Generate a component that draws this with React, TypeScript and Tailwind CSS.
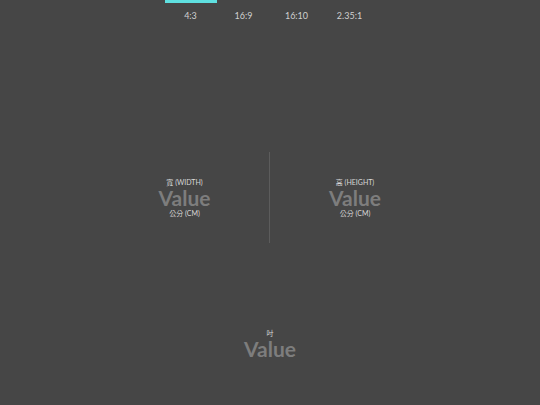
const RATIOS = ["4:3", "16:9", "16:10", "2.35:1"];

function Field({ label, unit }: { label: string; unit?: string }) {
  return (
    <div className="flex flex-col items-center">
      <span className="text-[7px] leading-[11px] text-[#d8d8d8]">{label}</span>
      <span className="text-[21px] font-bold leading-[20px] text-[#7d7d7d]">Value</span>
      {unit && <span className="text-[7px] leading-[11px] text-[#d8d8d8]">{unit}</span>}
    </div>
  );
}

export default function App() {
  return (
    <div
      className="flex h-[405px] w-[540px] flex-col bg-[#464646]"
      style={{ fontFamily: 'Lato, "Noto Sans CJK TC", sans-serif' }}
    >
      {/* ratio tabs */}
      <div className="mx-auto flex w-[212px]">
        {RATIOS.map((r, i) => (
          <div key={r} className="flex h-[30px] w-[53px] flex-col items-center">
            <div className={`h-[3px] w-[52px] ${i === 0 ? "bg-[#5fe0e0]" : ""}`} />
            <span className="mt-[7px] text-[9px] leading-[12px] text-[#d0d0d0]">{r}</span>
          </div>
        ))}
      </div>

      {/* width / height */}
      <div className="mx-auto mt-[122px] flex w-[340px]">
        <div className="flex h-[91px] w-[169px] items-center justify-center">
          <Field label="寬 (WIDTH)" unit="公分 (CM)" />
        </div>
        <div className="h-[91px] w-px bg-[#5c5c5c]" />
        <div className="flex h-[91px] w-[170px] items-center justify-center">
          <Field label="高 (HEIGHT)" unit="公分 (CM)" />
        </div>
      </div>

      {/* diagonal */}
      <div className="mt-[85px] flex justify-center">
        <Field label="吋" />
      </div>
    </div>
  );
}
